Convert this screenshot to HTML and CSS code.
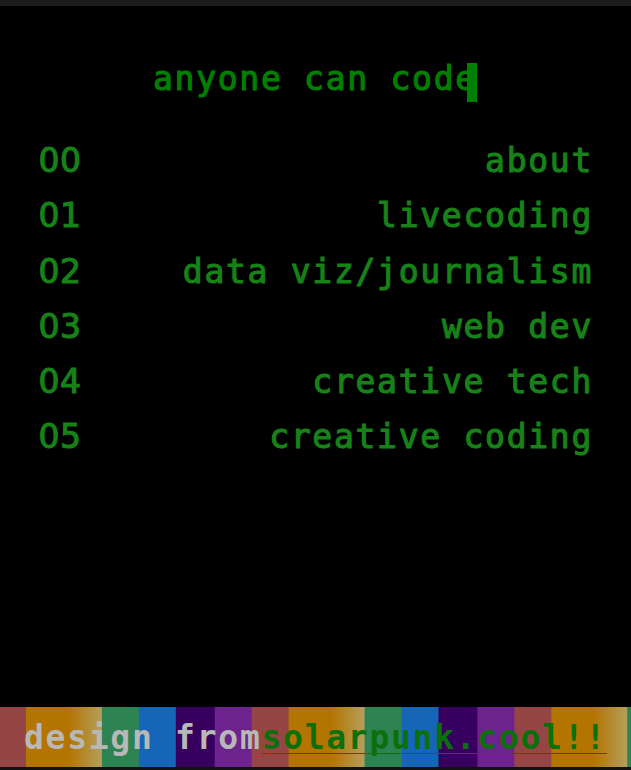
FILE: index.html
```html
<!DOCTYPE html>
<html lang="en">
<head>
<meta charset="utf-8">
<title>anyone can code</title>
<link rel="stylesheet" href="styles.css">
</head>
<body>
<header><h1>anyone can code<span class="cursor"></span></h1></header>
<main>
<ul>
<li><span class="num">00</span><span>about</span></li>
<li><span class="num">01</span><span>livecoding</span></li>
<li><span class="num">02</span><span>data viz/journalism</span></li>
<li><span class="num">03</span><span>web dev</span></li>
<li><span class="num">04</span><span>creative tech</span></li>
<li><span class="num">05</span><span>creative coding</span></li>
</ul>
</main>
<footer><span>design from</span><a href="#">solarpunk.cool!!</a></footer>
</body>
</html>
```
FILE: styles.css
```css
* { box-sizing: border-box; }
body {
  margin: 0;
  height: 770px;
  display: flex;
  flex-direction: column;
  overflow: hidden;
  background: #000;
  border-top: 6px solid #1c1c1c;
  border-bottom: 3px solid #111;
  color: #178217;
  font: 33px/39px "DejaVu Sans Mono", monospace;
  letter-spacing: 1.72px;
}
header {
  padding: 53px 0 0 153px;
}
h1 {
  position: relative;
  width: 324px;
  margin: 0;
  font: inherit;
  white-space: nowrap;
  color: #008000;
  -webkit-text-stroke: 1.1px;
}
.cursor {
  position: absolute;
  top: 4px;
  right: 0;
  width: 10px;
  height: 39px;
  background: #008000;
}
main {
  flex: 1;
  padding: 35px 38px 0 38.5px;
  -webkit-text-stroke: 1.1px;
}
ul {
  margin: 0;
  padding: 0;
  list-style: none;
}
li {
  display: flex;
  justify-content: space-between;
  height: 55.25px;
  line-height: 55px;
}
.num {
  font-family: "DejaVu Sans", sans-serif;
  letter-spacing: 0.5px;
}
footer {
  display: flex;
  height: 60px;
  padding-left: 24px;
  line-height: 62px;
  font-weight: bold;
  white-space: nowrap;
  color: #b8b8b8;
  background: repeating-linear-gradient(90deg,
    #964545 0 37px,
    #b47400 37px 79px, #b49f5c 113px,
    #2d8351 113px 150px,
    #1666b7 150px 187px,
    #37005e 187px 226px,
    #6d238e 226px 262.7px) -11px 0 / 262.7px 100%;
}
footer a {
  color: #0b700b;
  text-decoration: underline;
  text-decoration-thickness: 1px;
  text-underline-offset: 4px;
  text-decoration-skip-ink: none;
}
```
